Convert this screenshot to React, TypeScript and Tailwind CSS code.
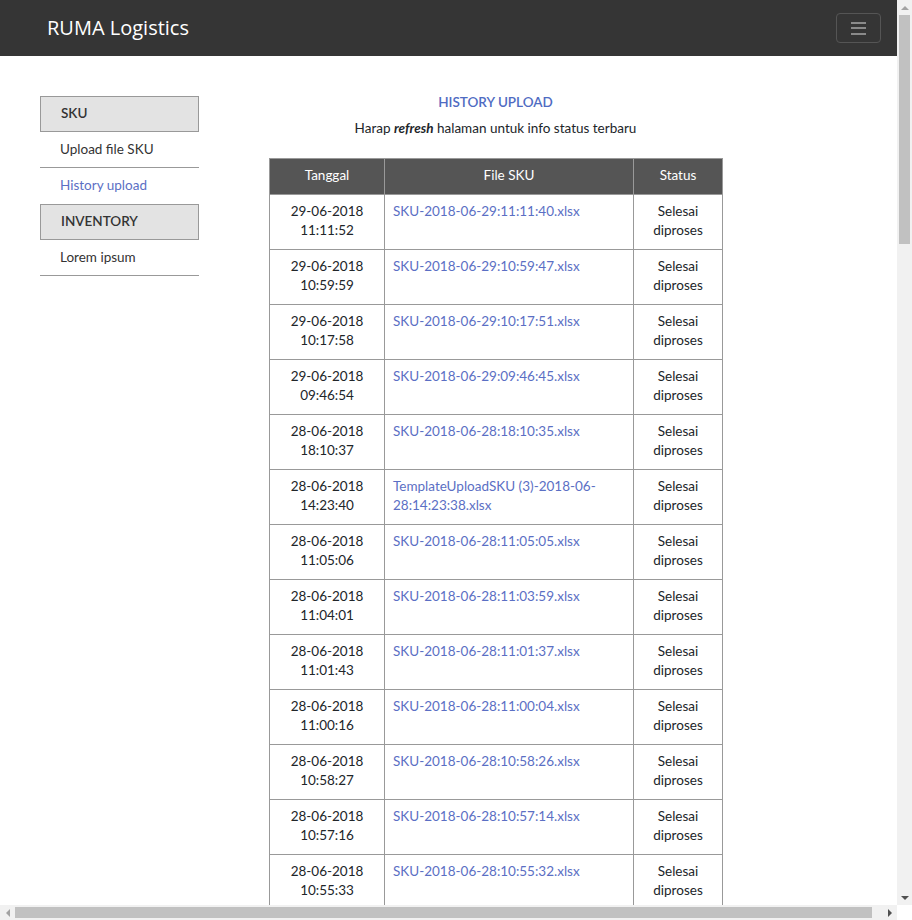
import React from "react";

type Row = { date: string; time: string; file: string };

const baseRows: Row[] = [
  { date: "29-06-2018", time: "11:11:52", file: "SKU-2018-06-29:11:11:40.xlsx" },
  { date: "29-06-2018", time: "10:59:59", file: "SKU-2018-06-29:10:59:47.xlsx" },
  { date: "29-06-2018", time: "10:17:58", file: "SKU-2018-06-29:10:17:51.xlsx" },
  { date: "29-06-2018", time: "09:46:54", file: "SKU-2018-06-29:09:46:45.xlsx" },
  { date: "28-06-2018", time: "18:10:37", file: "SKU-2018-06-28:18:10:35.xlsx" },
  { date: "28-06-2018", time: "14:23:40", file: "TemplateUploadSKU (3)-2018-06-28:14:23:38.xlsx" },
  { date: "28-06-2018", time: "11:05:06", file: "SKU-2018-06-28:11:05:05.xlsx" },
  { date: "28-06-2018", time: "11:04:01", file: "SKU-2018-06-28:11:03:59.xlsx" },
  { date: "28-06-2018", time: "11:01:43", file: "SKU-2018-06-28:11:01:37.xlsx" },
  { date: "28-06-2018", time: "11:00:16", file: "SKU-2018-06-28:11:00:04.xlsx" },
  { date: "28-06-2018", time: "10:58:27", file: "SKU-2018-06-28:10:58:26.xlsx" },
  { date: "28-06-2018", time: "10:57:16", file: "SKU-2018-06-28:10:57:14.xlsx" },
  { date: "28-06-2018", time: "10:55:33", file: "SKU-2018-06-28:10:55:32.xlsx" },
];

function SideHeader({ label }: { label: string }) {
  return (
    <div className="h-[36px] bg-[#e3e3e3] border border-[#999999] pl-[20px] pb-[1px] flex items-center font-semibold text-[#333333]">
      {label}
    </div>
  );
}

function SideItem({ label, active, border = true }: { label: string; active?: boolean; border?: boolean }) {
  return (
    <div
      className={
        "h-[36px] pl-[20px] pb-[1px] flex items-center " +
        (border ? "border-b border-[#999999] " : "") +
        (active ? "text-[#5b6fc4]" : "text-[#333333]")
      }
    >
      {label}
    </div>
  );
}

function Tri({ dir, dark }: { dir: "up" | "down" | "left" | "right"; dark?: boolean }) {
  const pts =
    dir === "up"
      ? "0,4 4,0 8,4"
      : dir === "down"
      ? "0,0 8,0 4,4"
      : dir === "left"
      ? "4,0 4,8 0,4"
      : "0,0 0,8 4,4";
  const w = dir === "up" || dir === "down" ? 8 : 4;
  const h = dir === "up" || dir === "down" ? 4 : 8;
  return (
    <svg width={w} height={h} viewBox={`0 0 ${w} ${h}`}>
      <polygon points={pts} fill={dark ? "#505050" : "#a3a3a3"} />
    </svg>
  );
}

export default function App() {
  return (
    <div className="w-[912px] h-[920px] overflow-hidden flex flex-col font-['Lato',sans-serif] text-[13.5px] leading-[21px] text-[#212529] bg-white">
      <div className="flex h-[905px]">
        <div className="w-[897px] h-[905px] overflow-hidden">
          <nav className="h-[56px] bg-[#353535] flex items-center justify-between pl-[47px] pr-[16px]">
            <span className="text-[20px] text-white leading-[30px] font-['Open_Sans',sans-serif]">RUMA Logistics</span>
            <button className="w-[45px] h-[30px] border border-[#555555] rounded-[4px] flex flex-col items-center justify-center gap-[3.5px]">
              <span className="block w-[15px] h-[2px] bg-[#8a8a8a]" />
              <span className="block w-[15px] h-[2px] bg-[#8a8a8a]" />
              <span className="block w-[15px] h-[2px] bg-[#8a8a8a]" />
            </button>
          </nav>
          <div className="min-w-[907px] flex pt-[36px] pb-[40px]">
            <aside className="ml-[40px] w-[159px] mt-[4px] shrink-0">
              <SideHeader label="SKU" />
              <SideItem label="Upload file SKU" />
              <SideItem label="History upload" active border={false} />
              <SideHeader label="INVENTORY" />
              <SideItem label="Lorem ipsum" />
            </aside>
            <main className="ml-[70px] w-[453px] shrink-0">
              <h1 className="text-center text-[#4f6bc2] font-semibold text-[13.5px] leading-[21px]">HISTORY UPLOAD</h1>
              <p className="text-center mt-[5px]">
                Harap <b className="italic font-bold">refresh</b> halaman untuk info status terbaru
              </p>
              <table className="mt-[19px] w-[453px] table-fixed border-collapse">
                <colgroup>
                  <col className="w-[115px]" />
                  <col className="w-[249px]" />
                  <col className="w-[89px]" />
                </colgroup>
                <thead>
                  <tr className="bg-[#555555] text-white">
                    <th className="h-[36px] pb-[2px] border border-[#999999] font-normal text-center align-middle">Tanggal</th>
                    <th className="h-[36px] pb-[2px] border border-[#999999] font-normal text-center align-middle">File SKU</th>
                    <th className="h-[36px] pb-[2px] border border-[#999999] font-normal text-center align-middle">Status</th>
                  </tr>
                </thead>
                <tbody className="leading-[19px]">
                  {baseRows.map((r, i) => (
                    <tr key={i} className="h-[55px]">
                      <td className="border border-[#999999] align-top text-center pt-[7px] pb-[9px] px-[8px]">
                        {r.date}
                        <br />
                        {r.time}
                      </td>
                      <td className="border border-[#999999] align-top text-left pt-[7px] pb-[9px] px-[8px] text-[#5b6fc4]">
                        {r.file}
                      </td>
                      <td className="border border-[#999999] align-top text-center pt-[7px] pb-[9px] px-[8px]">
                        Selesai
                        <br />
                        diproses
                      </td>
                    </tr>
                  ))}
                </tbody>
              </table>
            </main>
          </div>
        </div>
        <div className="w-[15px] h-[905px] bg-[#f1f1f1] flex flex-col items-center">
          <div className="h-[15px] w-[15px] flex items-center justify-center">
            <Tri dir="up" />
          </div>
          <div className="flex-1 w-full px-[2px]">
            <div className="h-[229px] w-full bg-[#c1c1c1]" />
          </div>
          <div className="h-[15px] w-[15px] flex items-center justify-center">
            <Tri dir="down" dark />
          </div>
        </div>
      </div>
      <div className="flex h-[15px]">
        <div className="w-[897px] h-[15px] bg-[#f1f1f1] flex items-center">
          <div className="w-[15px] h-[15px] flex items-center justify-center">
            <Tri dir="left" />
          </div>
          <div className="flex-1 h-full py-[2px]">
            <div className="h-full w-[857px] bg-[#c1c1c1]" />
          </div>
          <div className="w-[15px] h-[15px] flex items-center justify-center">
            <Tri dir="right" dark />
          </div>
        </div>
        <div className="w-[15px] h-[15px] bg-[#ffffff]" />
      </div>
    </div>
  );
}
